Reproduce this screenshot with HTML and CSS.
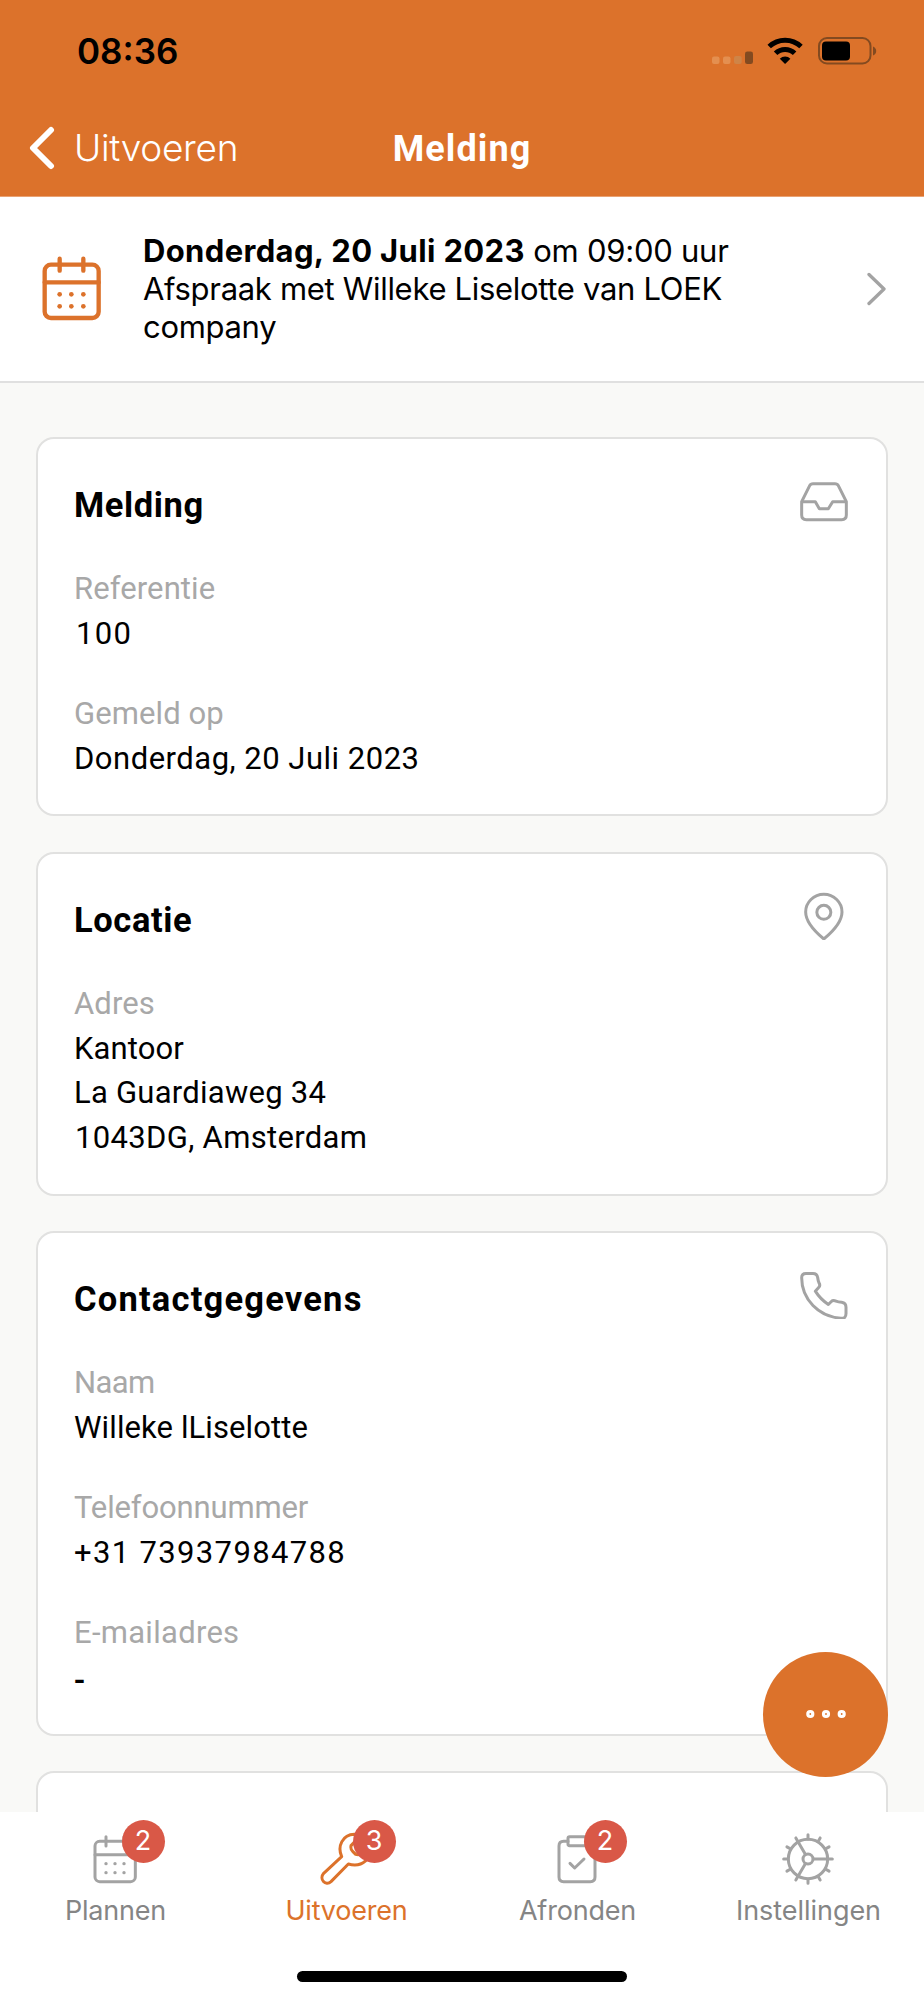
FILE: index.html
```html
<!DOCTYPE html>
<html lang="nl">
<head>
<meta charset="utf-8">
<title>Melding</title>
<link rel="stylesheet" href="styles.css">
</head>
<body>
<div class="screen">
  <header class="header">
    <div class="status">
      <span class="clock">08:36</span>
      <svg class="status-icons" width="166" height="30" viewBox="711 35.500 166 30">
        <g fill="#e48f50"><rect x="712" y="56" width="7.5" height="7.5" rx="2"/><rect x="723" y="56" width="7.5" height="7.5" rx="2"/></g>
        <rect x="734" y="55.500" width="7.700" height="8" rx="2" fill="#cf8447"/>
        <rect x="745" y="51" width="8" height="12.500" rx="2.300" fill="#834a20"/>
        <g fill="none" stroke="#000" stroke-width="5"><path d="M769.200 46 A23.200 23.200 0 0 1 801 46"/><path d="M775.600 52.800 A13.500 13.500 0 0 1 794.600 52.800"/></g>
        <path d="M785.100 63.500 L779.800 58.300 A7.500 7.500 0 0 1 790.400 58.300 Z"/>
        <rect x="819" y="37.500" width="51.500" height="25.500" rx="8" fill="none" stroke="#834a20" stroke-width="2"/>
        <rect x="822" y="41" width="28" height="19" rx="4"/>
        <path d="M873 46 Q876.200 47.500 876.200 50.500 T873 55 Z" fill="#834a20"/>
      </svg>
    </div>
    <nav class="navbar">
      <a class="back"><svg width="26" height="44" viewBox="0 0 26 44"><path d="M22 4 L4 22 L22 40" fill="none" stroke="#fff" stroke-width="6" stroke-linecap="round" stroke-linejoin="round"/></svg><span>Uitvoeren</span></a>
      <h1 class="page-title">Melding</h1>
    </nav>
  </header>

  <section class="appointment">
    <svg class="appointment-icon" width="60" height="66" viewBox="126 169 180 198" fill="none" stroke="#dc722b" stroke-width="13" stroke-linecap="round">
      <rect x="134" y="195" width="162" height="160" rx="19"/><path d="M134 248H296M179 177V213M250 177V213"/>
      <g fill="#dc722b" stroke="none"><circle cx="179" cy="284" r="7"/><circle cx="214" cy="284" r="7"/><circle cx="250" cy="284" r="7"/><circle cx="179" cy="320" r="7"/><circle cx="214" cy="320" r="7"/><circle cx="250" cy="320" r="7"/></g>
    </svg>
    <div class="appointment-text">
      <div><b class="date">Donderdag, 20 Juli 2023</b><span class="time"> om 09:00 uur</span></div>
      <div class="subject">Afspraak met Willeke Liselotte van LOEK</div>
      <div class="subject">company</div>
    </div>
    <svg width="20" height="34" viewBox="0 0 20 34"><path d="M2 2.500 L17 17 L2 31.500" fill="none" stroke="#a3a3a3" stroke-width="3.300" stroke-linecap="round" stroke-linejoin="round"/></svg>
  </section>

  <main class="content">
    <article class="card">
      <div class="card-head"><h2>Melding</h2>
        <svg width="48" height="48" viewBox="1013 830 144 144" fill="none" stroke="#a3a3a3" stroke-width="9" stroke-linejoin="round"><path d="M1018 904 L1042 856 Q1045 850 1052 850 H1118 Q1125 850 1128 856 L1152 904 V944 Q1152 958 1138 958 H1032 Q1018 958 1018 944 Z"/><path d="M1018 904 H1059 L1071 925 H1098 L1111 904 H1152"/></svg>
      </div>
      <dl class="fields">
        <div><dt>Referentie</dt><dd class="numeric reference">100</dd></div>
        <div><dt>Gemeld op</dt><dd class="long-date">Donderdag, 20 Juli 2023</dd></div>
      </dl>
    </article>
    <article class="card">
      <div class="card-head"><h2>Locatie</h2>
        <svg width="48" height="48" viewBox="179 155 144 144" fill="none" stroke="#a3a3a3" stroke-width="9" stroke-linejoin="round"><path d="M250.500 296 C218 269 196 242 196 215 A54.500 53 0 0 1 305 215 C305 242 283 269 250.500 296 Z"/><circle cx="250.500" cy="216" r="21"/></svg>
      </div>
      <dl class="fields">
        <div><dt>Adres</dt><dd>Kantoor</dd><dd class="street">La Guardiaweg 34</dd><dd class="city">1043DG, Amsterdam</dd></div>
      </dl>
    </article>
    <article class="card">
      <div class="card-head"><h2 class="contact-title">Contactgegevens</h2>
        <svg width="48" height="48" viewBox="179 1293.500 144 144" fill="none" stroke="#a3a3a3" stroke-width="9" stroke-linejoin="round"><path d="M197 1301 H218 Q230 1301 232 1313 Q233 1322 236 1329 Q241 1337 235 1343 L225 1354 Q240 1378 264 1394 L273 1385 Q278 1380 287 1384 Q294 1387 304 1387 Q317 1389 317 1402 V1421 Q317 1437 302 1435 C235 1431 184 1378 184 1314 Q184 1301 197 1301 Z"/></svg>
      </div>
      <dl class="fields">
        <div><dt class="name-label">Naam</dt><dd>Willeke lLiselotte</dd></div>
        <div><dt class="phone-label">Telefoonnummer</dt><dd class="numeric">+31 73937984788</dd></div>
        <div><dt class="email-label">E-mailadres</dt><dd class="empty">-</dd></div>
      </dl>
    </article>
    <article class="card card-next"></article>
  </main>

  <button class="fab" aria-label="Meer">
    <svg width="42" height="12" viewBox="0 0 42 12" fill="none" stroke="#fff" stroke-width="3.200"><circle cx="5.300" cy="6" r="2.500"/><circle cx="21" cy="6" r="2.500"/><circle cx="36.700" cy="6" r="2.500"/></svg>
  </button>

  <footer class="tabbar">
    <div class="tabs">
      <a class="tab">
        <span class="tab-icon">
          <svg width="54" height="54" viewBox="265 276 162 162" fill="none" stroke="#a3a3a3" stroke-width="9" stroke-linecap="round"><rect x="286" y="304" width="121" height="121" rx="14"/><path d="M286 344H407M319 290V318M373 290V318"/><g fill="#a3a3a3" stroke="none"><circle cx="319" cy="371" r="5"/><circle cx="346" cy="371" r="5"/><circle cx="373" cy="371" r="5"/><circle cx="319" cy="398" r="5"/><circle cx="346" cy="398" r="5"/><circle cx="373" cy="398" r="5"/></g></svg>
          <span class="badge">2</span>
        </span>
        <span class="tab-label">Plannen</span>
      </a>
      <a class="tab active">
        <span class="tab-icon">
          <svg width="54" height="54" viewBox="959 276 162 162" fill="none" stroke="#dc722b" stroke-width="9" stroke-linecap="round" stroke-linejoin="round"><path d="M973 400 L1027 350 C1013 318 1030 284 1065 283 Q1077 283 1085 286 L1055 317 Q1053 328 1060 334 L1069 343 Q1080 346 1087 340 L1112 318 C1121 352 1089 385 1047 372 L995 425 C979 439 958 418 973 400 Z"/></svg>
          <span class="badge">3</span>
        </span>
        <span class="tab-label">Uitvoeren</span>
      </a>
      <a class="tab">
        <span class="tab-icon">
          <svg width="54" height="54" viewBox="265 276 162 162" fill="none" stroke="#a3a3a3" stroke-width="9" stroke-linecap="round" stroke-linejoin="round"><path d="M319 304H306Q292 304 292 318V411Q292 425 306 425H386Q400 425 400 411V318Q400 304 386 304H373"/><rect x="319" y="290" width="54" height="27" rx="5"/><path d="M325 370L339 384L367 357"/></svg>
          <span class="badge">2</span>
        </span>
        <span class="tab-label">Afronden</span>
      </a>
      <a class="tab">
        <span class="tab-icon">
          <svg width="54" height="54" viewBox="-81 -81 162 162" fill="none" stroke="#a3a3a3" stroke-width="9" stroke-linecap="round"><circle r="59"/><circle r="15"/><path d="M16 0H73M-8 -14L-36.500 -63.200M-8 14L-36.500 63.200M0 -60V-73M0 60V73M-60 0H-73M30 -52L36.500 -63.200M52 -30L63.200 -36.500M52 30L63.200 36.500M30 52L36.500 63.200M-52 30L-63.200 36.500M-52 -30L-63.200 -36.500"/></svg>
        </span>
        <span class="tab-label settings">Instellingen</span>
      </a>
    </div>
    <div class="home-indicator"></div>
  </footer>
</div>
</body>
</html>
```
FILE: styles.css
```css
* { box-sizing: border-box; }
body, h1, h2, dl, dd { margin: 0; }
body { background: #f9f9f7; color: #000; font-family: Inter, "Liberation Sans", sans-serif; }
svg { display: block; flex: none; }

.screen { position: relative; display: flex; flex-direction: column; width: 924px; height: 2000px; overflow: hidden; }

.header { flex: none; height: 197px; background: #dc722b; border-bottom: 1px solid #e9a273; }
.status { display: flex; justify-content: space-between; align-items: center; height: 101px; padding: 0 47px 0 77px; }
.clock { font-size: 35px; font-weight: 600; }
.navbar { display: grid; grid-template-columns: 1fr auto 1fr; align-items: center; height: 93px; padding: 0 29px; color: #fff; }
.back { display: flex; align-items: center; gap: 19px; font-size: 37px; font-weight: 300; letter-spacing: -0.300px; }
.page-title { padding-top: 2px; font: 700 36px/48px Roboto, sans-serif; letter-spacing: 1.100px; }

.appointment { flex: none; display: flex; align-items: center; height: 186px; padding: 0 37px 0 42px; background: #fff; border-bottom: 2px solid #e0e0e0; }
.appointment-text { flex: 1; padding-left: 41px; font-size: 31px; line-height: 38px; white-space: nowrap; }
.date { font-weight: 700; letter-spacing: 0.350px; }
.time { white-space: pre; letter-spacing: -0.250px; }
.subject { letter-spacing: -0.310px; }

.content { flex: 1; min-height: 0; display: flex; flex-direction: column; gap: 35.500px; padding: 54px 36px 0; overflow: hidden; font-family: Roboto, "Noto Sans", sans-serif; }
.card { flex: none; padding: 35px 38px 33px 36px; background: #fff; border: 2px solid #e1e1e0; border-radius: 18px; }
.card-next { height: 200px; }
.card-head { display: flex; justify-content: space-between; align-items: center; height: 54px; }
.card-head h2 { padding-top: 8px; font-size: 34.500px; font-weight: 700; line-height: 46px; letter-spacing: 0.600px; }
.card-head .contact-title { letter-spacing: 1.200px; }
.fields { display: grid; gap: 35.600px; padding-top: 39px; font-size: 31px; line-height: 44.700px; }
.fields dt { color: #a8a8a8; letter-spacing: 0.100px; }
.fields dd { letter-spacing: 0.100px; }
.fields .numeric { letter-spacing: 1.350px; }
.fields .reference { padding-left: 2px; }
.fields .long-date { letter-spacing: 0.500px; }
.fields .street { letter-spacing: 0.250px; }
.fields .city { padding-left: 1px; letter-spacing: 0.330px; }
.fields .name-label { letter-spacing: -0.600px; }
.fields .phone-label { letter-spacing: -0.150px; }
.fields .email-label { letter-spacing: 0.280px; }
.fields .empty { font-family: "Noto Sans", sans-serif; font-size: 34px; font-weight: 500; }

.fab { position: absolute; right: 36px; top: 1651.500px; display: grid; place-items: center; width: 125px; height: 125px; padding: 0; border: 0; border-radius: 50%; background: #dc722b; }

.tabbar { flex: none; display: flex; flex-direction: column; justify-content: space-between; align-items: center; height: 188px; padding: 20px 0 18px; background: #fff; }
.tabs { display: grid; grid-template-columns: repeat(4, 1fr); width: 100%; }
.tab { display: flex; flex-direction: column; align-items: center; color: #858585; }
.tab.active { color: #dc722b; }
.tab-icon { position: relative; margin-right: 1px; }
.badge { position: absolute; left: 33.500px; top: -12.500px; width: 43px; height: 43px; border-radius: 50%; background: #d95847; color: #fff; font-size: 27px; line-height: 42px; text-align: center; }
.tab-label { font-size: 27px; line-height: 34px; padding-top: 8px; letter-spacing: -0.200px; }
.tab-label.settings { letter-spacing: -0.050px; }
.home-indicator { width: 330px; height: 11px; border-radius: 6px; background: #000; }
```
